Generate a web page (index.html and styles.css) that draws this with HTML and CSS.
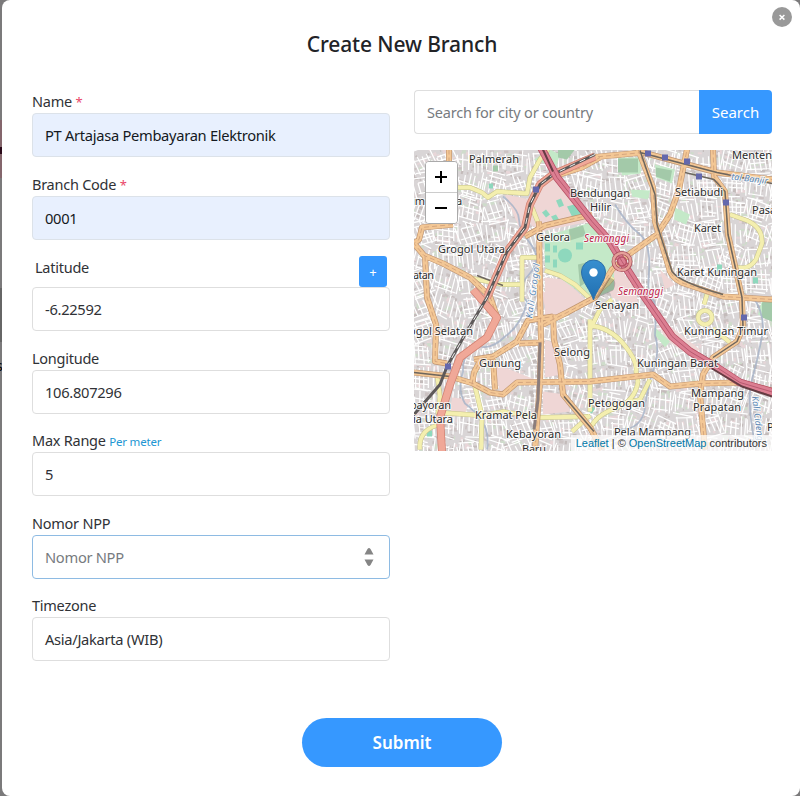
FILE: index.html
```html
<!DOCTYPE html>
<html lang="en">
<head>
<meta charset="utf-8">
<title>Create New Branch</title>
<link rel="stylesheet" href="styles.css">
</head>
<body>
<div class="backdrop"><i class="stripe"></i><i class="mark"></i><i class="shade"></i><span class="behind">s</span></div>
<main class="modal">
  <button class="close" aria-label="Close"><svg viewBox="0 0 20 20"><path d="M7.6 8l4.8 4.6M12.4 8l-4.8 4.6"/></svg></button>
  <h1>Create New Branch</h1>
  <div class="columns">
    <form class="fields">
      <div class="field"><label>Name <b>*</b></label><div class="input filled">PT Artajasa Pembayaran Elektronik</div></div>
      <div class="field"><label>Branch Code <b>*</b></label><div class="input filled">0001</div></div>
      <div class="field"><div class="row"><label>Latitude</label><button type="button" class="add">+</button></div><div class="input">-6.22592</div></div>
      <div class="field"><label>Longitude</label><div class="input">106.807296</div></div>
      <div class="field"><label>Max Range <small>Per meter</small></label><div class="input">5</div></div>
      <div class="field"><label>Nomor NPP</label><div class="input focus"><span>Nomor NPP</span><svg class="spin" viewBox="0 0 10 20"><path d="M.5 7.500L3.500 2Q5 0 6.500 2L9.500 7.500ZM.5 12.500H9.500L6.500 18Q5 20 3.500 18Z"/></svg></div></div>
      <div class="field"><label>Timezone</label><div class="input">Asia/Jakarta (WIB)</div></div>
    </form>
    <section class="side">
      <div class="search"><div class="query">Search for city or country</div><button>Search</button></div>
      <div class="map">
        <svg class="tiles" viewBox="414 150.5 358 300.5">
          <rect x="414" y="150" width="358" height="302" fill="#d9d5d6"/>
          <g id="blocks"></g>
          <g id="streets"></g>
          <g class="pink">
            <path d="M542 178L555 180 590 222 540 232 528 222ZM505 195L530 200 520 230Z"/>
            <path d="M545 278L565 280 585 300 545 322ZM545 340L558 345 562 375 545 378ZM543 392L565 395 570 412 543 415ZM492 363L535 380 500 392ZM585 230L600 240 635 290 640 310 612 298ZM452 398L470 400 465 414 450 418ZM660 270L675 285 665 290ZM655 315L700 350 690 356 665 340ZM540 290L550 296 546 310Z"/>
          </g>
          <g class="green">
            <path d="M544 237L594 222 614 250 614 290 590 300 545 268Z"/>
            <path d="M618 158L640 158 641 174 622 176ZM655 165L675 170 672 184 656 178ZM762 301H772V322L758 315ZM631 190L650 191 648 200 632 197ZM675 208L690 215 686 225 674 220ZM655 328L670 342 665 348 654 334ZM534 160L550 150 560 155 556 168Z"/>
          </g>
          <g class="wood"><path d="M618 159h20v14h-20zM762 303l10-3v22l-10-4zM656 168l16 3-2 11-14-5zM578 265l12-3 2 17-12 8zM569 230l14-4 3 10-16 5zM493 166h5v6h-5zM558 150h17l-8 10-9-2z"/></g>
          <g class="pitch">
            <circle cx="565" cy="256" r="7"/><path d="M545 244h5v8h-5zM553 246h4v7h-4zM545 256h5v7h-5zM553 260h4v8h-4zM576 243h7v7h-7zM542 213l4-3 4 5-4 3zM551 217l5-2 3 5-5 2zM556 201l5-2 3 7-5 2zM717 265h5v7h-5zM753 278h5v6h-5zM427 431h5v6h-5zM489 184h4v5h-4zM590 406l5 3-3 5-4-2zM567 207l14-4 2 13-10 3z"/>
          </g>
          <g class="water">
            <path d="M503 197Q519 210 519 220T531 245T529 275T527 302Q522 325 505 337Q492 350 480 347Q462 352 463 372Q457 390 465 404Q477 413 480 420Q490 430 487 450"/>
            <path d="M615 205Q627 225 639 234T649 272T652 300T655 336Q660 350 654 368T645 408T620 430"/>
            <path d="M718 174Q745 174 772 180M752 296Q766 315 762 337T752 380T756 450"/>
          </g>
          <g class="road yellow-c"><path d="M457 188L470 188 482 193 488 198 497 192 527 194 530 178 540 160 548 150M532 208L540 228M522 302V258H537M545 271L560 276 575 285 590 299 608 284 613 278M730 215L747 221Q763 228 762 244L756 260Q748 272 735 267M590 326Q610 328 624 345T636 372L638 382Q635 402 615 409T590 430M590 412V320M590 330L600 310 612 300M437 375L440 397 438 413 482 416 503 412 540 418 590 417M475 387L482 416 481 450M420 450Q418 430 440 425M704 305L707 295M713 329L730 343M590 416L572 432M470 278L482 281 502 285 520 285M650 380L640 400 609 407"/><circle cx="705" cy="318" r="7"/></g>
          <g class="road yellow"><path d="M457 188L470 188 482 193 488 198 497 192 527 194 530 178 540 160 548 150M532 208L540 228M522 302V258H537M545 271L560 276 575 285 590 299 608 284 613 278M730 215L747 221Q763 228 762 244L756 260Q748 272 735 267M590 326Q610 328 624 345T636 372L638 382Q635 402 615 409T590 430M590 412V320M590 330L600 310 612 300M437 375L440 397 438 413 482 416 503 412 540 418 590 417M475 387L482 416 481 450M420 450Q418 430 440 425M704 305L707 295M713 329L730 343M590 416L572 432M470 278L482 281 502 285 520 285M650 380L640 400 609 407"/><circle cx="705" cy="318" r="7"/></g>
          <g id="orange-roads">
            <path d="M449 150V166M453 225L422 228 419 240 414 244 424 256 443 264 470 278 490 297 497 317M425 257L427 298 436 325 435 362 447 364M525 237L545 226 592 215M539 222L540 295 541 342 540 382 535 450M414 373L450 377 473 384 490 393 503 395 517 383 590 382 653 375 670 387 700 384 740 383 772 391M553 315L554 340 560 365 563 395 590 428 602 450M543 325L567 313 595 298 612 270 630 254 657 235 670 215 679 190 687 150M474 360L493 357 517 342 528 321 553 317M472 385L474 373 482 358M590 158L643 153 680 163 717 173 772 180M560 175L582 168 600 158M713 150L714 177 725 192 728 235 742 298 743 328 737 342 713 358 703 375 700 395 705 450M493 360L495 390M541 343L519 344"/>
            <path d="M638 150L653 188 655 222 670 272Q675 282 687 285L723 297 772 300"/>
          </g>
          <g class="rail"><path d="M540 343L538 400 534 430"/><path d="M640 151L655 195 657 225 672 272Q680 283 723 295M414 373L450 377M564 397L594 432M685 173L714 180 725 192 728 235 742 298 743 328 737 342 713 358M717 173L772 184M640 153L717 173M477 276L503 286"/></g>
          <g class="salmon-c"><path d="M595 157L553 175 540 185 530 205 525 228 507 252 487 298M473 290L497 318 487 338 460 358 450 385 440 418 442 452"/></g>
          <g class="salmon"><path d="M595 157L553 175 540 185 530 205 525 228 507 252 487 298M473 290L497 318 487 338 460 358 450 385 440 418 442 452"/></g>
          <g class="train"><path d="M595 155L553 175 540 185 530 205 525 228 507 252 487 298 465 335 447 367 440 385 414 415"/></g>
          <g class="train-dash"><path d="M595 155L553 175 540 185 530 205 525 228 507 252 487 298 465 335 447 367"/></g>
          <g class="toll-c"><path d="M541 148L557 178 592 222 610 242 622 262 645 298 672 337 690 352 717 368 740 383 774 393"/></g>
          <g class="toll"><path d="M541 148L557 178 592 222 610 242 622 262 645 298 672 337 690 352 717 368 740 383 774 393"/></g>
          <g class="toll-mid"><path d="M541 148L557 178 592 222 610 242 622 262 645 298 672 337 690 352 717 368 740 383 774 393"/></g>
          <g class="ring"><circle cx="622" cy="262" r="8.500"/><circle cx="622" cy="262" r="8.500"/><circle cx="622" cy="262" r="4.500"/></g>
          <path class="dark" d="M543 150L553 172M712 369L742 387 772 397"/>
          <g class="station"><path d="M533 187h6v6h-6zM645 151h6v6h-6zM662 155h6v6h-6zM684 159h6v6h-6zM696 174h6v6h-6zM723 200h6v6h-6zM741 315h6v6h-6zM445 364h6v6h-6z"/></g>
          <g class="river-name"><text transform="translate(532 319) rotate(-82)" textLength="55">Kali Grogol</text><text transform="translate(731 180) rotate(7)">tal Banjir</text><text transform="translate(752 397) rotate(83)">Kali Cideng</text></g>
          <g class="places">
            <text x="469" y="163" textLength="50">Palmerah</text><text x="732" y="159" textLength="40">Menten</text>
            <text x="570" y="197.500" textLength="60">Bendungan</text><text x="590" y="211.500" textLength="21">Hilir</text>
            <text x="675" y="196" textLength="48">Setiabudi</text><text x="752" y="214">Pasar</text><text x="694" y="232" textLength="27">Karet</text>
            <text x="408" y="205">um</text><text x="456" y="205">a</text><text x="536" y="241" textLength="34">Gelora</text><text x="438" y="253" textLength="67">Grogol Utara</text>
            <text x="413" y="279.500" textLength="21">atan</text><text x="677" y="276" textLength="80">Karet Kuningan</text><text x="595" y="309" textLength="44">Senayan</text>
            <text x="409" y="335" textLength="64">ogol Selatan</text><text x="684" y="335" textLength="84">Kuningan Timur</text><text x="554" y="356.500" textLength="36">Selong</text>
            <text x="479" y="367.500" textLength="42">Gunung</text><text x="637" y="367.500" textLength="81">Kuningan Barat</text><text x="691" y="397" textLength="53">Mampang</text><text x="693" y="411" textLength="48">Prapatan</text>
            <text x="588" y="407" textLength="57">Petogogan</text><text x="410" y="409.500" textLength="41">bayoran</text><text x="413" y="423.500" textLength="40">ia Utara</text><text x="475" y="419" textLength="62">Kramat Pela</text>
            <text x="506" y="438.500" textLength="55">Kebayoran</text><text x="522" y="453" textLength="24">Baru</text><text x="614" y="436.500" textLength="77">Pela Mampang</text><text x="767" y="431">P</text>
            <text class="red" x="584" y="242" textLength="45">Semanggi</text><text class="red" x="618" y="295" textLength="45">Semanggi</text>
          </g>
          <defs><linearGradient id="pin" x1="0" y1="0" x2="0" y2="1"><stop offset="0" stop-color="#388fd0"/><stop offset="1" stop-color="#216fb0"/></linearGradient></defs>
          <path d="M594 300L609 278Q619 280 613 291Z" fill="#000" opacity=".22"/>
          <path d="M593.500 300.500C591 291 581.500 282 581.500 272.500a12 12 0 0 1 24 0C605.500 282 596 291 593.500 300.500Z" fill="url(#pin)" stroke="#2c6fa8"/>
          <circle cx="593.500" cy="273" r="4.200" fill="#fff"/>
        </svg>
        <div class="zoom"><button aria-label="Zoom in"><svg viewBox="0 0 14 14"><path d="M1 7H13M7 1V13"/></svg></button><button aria-label="Zoom out"><svg viewBox="0 0 14 14"><path d="M1 7H13"/></svg></button></div>
        <div class="credit"><a>Leaflet</a> | © <a>OpenStreetMap</a> contributors</div>
      </div>
    </section>
  </div>
  <button class="submit">Submit</button>
</main>
<script src="map.js"></script>
</body>
</html>
```
FILE: styles.css
```css
*{box-sizing:border-box}
body{margin:0;width:800px;height:796px;overflow:hidden;background:#7b7a7b;font-family:"Noto Sans","Open Sans",sans-serif;color:#303236;position:relative}
button{border:0;padding:0;font-family:inherit}
.backdrop{position:absolute;inset:0}
.stripe{position:absolute;top:120px;width:4px;height:58px;background:#84666c}
.mark{position:absolute;top:147px;width:2px;height:7px;background:#2a0919}
.shade{position:absolute;top:288px;width:4px;height:54px;background:#666}
.behind{position:absolute;left:-4px;top:356px;font-size:14px;color:#000}
.modal{position:relative;margin-left:2px;width:798px;height:796px;background:#fff;border-radius:8px;padding:0 28px 0 30px;display:flex;flex-direction:column}
.close{position:absolute;left:770px;top:7px;width:20px;height:20px;border-radius:50%;background:#999}
.close svg{display:block;width:20px;height:20px;fill:none;stroke:#fff;stroke-width:1.5}
h1{margin:30px 0 0;height:28px;text-align:center;font-size:21px;line-height:28px;font-weight:500;letter-spacing:-.12px;color:#222327}
.columns{display:grid;grid-template-columns:358px 358px;gap:24px;margin-top:32px}
.fields{display:flex;flex-direction:column;gap:16.500px;padding-top:1.300px;margin:0}
label{display:block;height:22px;line-height:20.500px;font-size:14.500px;letter-spacing:-.25px;white-space:nowrap}
label b{font-weight:400;font-size:13px;color:#e94568}
label small{font-size:11.500px;letter-spacing:-.2px;color:#2196d3}
.row{height:31px;display:flex;justify-content:space-between;padding:0 3px}
.row label{line-height:22px}
.add{width:28px;height:31px;border-radius:3px;background:#3698ff;color:#fff;font-size:13px}
.input{height:44px;border:1px solid #dedede;border-radius:4px;padding:0 12px;display:flex;align-items:center;justify-content:space-between;font-size:14.700px;letter-spacing:-.3px}
.filled{background:#e8f0fe;color:#141922;border-color:#dce2e9}
.focus{border-color:#8ebbe3;color:#777b80}
.spin{width:10px;height:20px;margin-right:3px;fill:#858585}
.search{height:44px;display:flex}
.query{width:285px;border:1px solid #dedede;border-right:0;border-radius:4px 0 0 4px;padding-left:12px;line-height:43px;font-size:14.500px;letter-spacing:-.2px;color:#777b80}
.search button{flex:1;border-radius:0 4px 4px 0;background:#3698ff;color:#fff;font-size:15px}
.side{padding-top:.400px}
.map{position:relative;margin-top:16px;width:358px;height:300.500px;overflow:hidden}
.tiles{display:block;width:358px;height:300.500px}
.tiles path,.tiles circle{stroke-linejoin:round}
#streets path{fill:none;stroke:#fff}
.pink{fill:#efd6d5}.green{fill:#c4e9c8}.wood{fill:#a3c9a9}.pitch{fill:#8ed8bd}
.water{fill:none;stroke:#a8b4c8;stroke-width:1.800;opacity:.85}
.road{fill:none;stroke:#f4efaf;stroke-width:3.800}
.yellow-c{stroke:#c5c28b;stroke-width:4.800}
#orange-roads{fill:none;stroke:#f3c795;stroke-width:4.800}
#orange-roads .casing{stroke:#bf936f;stroke-width:6}
#orange-roads .center{stroke:#c99874;stroke-width:.700;stroke-dasharray:5 3}
.rail{fill:none;stroke:#6d665e;stroke-width:1.500}
.rail path:first-child{stroke:#8b7d7c;stroke-width:3}
.salmon-c{fill:none;stroke:#d28273;stroke-width:8}.salmon{fill:none;stroke:#f0a898;stroke-width:6.500}
.train{fill:none;stroke:#5d5959;stroke-width:3}.train-dash{fill:none;stroke:#eee;stroke-width:1;stroke-dasharray:6 5}
.toll-c{fill:none;stroke:#b65265;stroke-width:8}.toll{fill:none;stroke:#dc7f92;stroke-width:6.500}.toll-mid{fill:none;stroke:#b85a70;stroke-width:1}
.ring{fill:none;stroke:#a9505c;stroke-width:4}
.ring circle+circle{stroke:#e5a09a;stroke-width:2.500}
.ring circle:last-child{stroke:#b65265;stroke-width:1.500}
.dark{fill:none;stroke:#653d43;stroke-width:2}
.station{fill:#6468ad}
.places text,.river-name text{paint-order:stroke;stroke:#fffc;stroke-width:2px;stroke-linejoin:round;font-size:11px;fill:#2c2c2c}
.river-name text{font-size:9px;font-style:italic;fill:#5a87b5}
.places .red{fill:#bd244c;font-style:italic;font-size:10px}
.zoom{position:absolute;left:10.500px;top:10.500px;width:33px;height:63px;border:1px solid #aaa;border-radius:4px;background:#fff;display:flex;flex-direction:column;overflow:hidden}
.zoom button{flex:1;background:#fff;display:grid;place-items:center}
.zoom button+button{border-top:1px solid #ccc}
.zoom svg{width:14px;height:14px;fill:none;stroke:#000;stroke-width:2}
.credit{position:absolute;right:0;bottom:0;height:16px;padding:0 5px;background:#ffffffb8;font:11px/16px "Liberation Sans",sans-serif;color:#333;white-space:nowrap}
.credit a{color:#0078a8}
.submit{width:200px;height:49px;margin:56.500px 0 0 270px;border-radius:25px;background:#3698ff;color:#fff;font-size:17px;font-weight:600}
```
FILE: map.js
```js
const NS = 'http://www.w3.org/2000/svg';
let seed = 71;
const rnd = () => (seed = (seed * 16807) % 2147483647) / 2147483647;
const add = (parent, d, attrs) => {
  const p = document.createElementNS(NS, 'path');
  p.setAttribute('d', d);
  for (const k in attrs) p.setAttribute(k, attrs[k]);
  parent.appendChild(p);
};

// Building blocks and residential streets, drawn district by district
const blocks = document.getElementById('blocks');
const streets = document.getElementById('streets');
for (let y = 150; y < 455; y += 24) {
  for (let x = 410; x < 776; x += 24) {
    const a = (rnd() - 0.5) * 0.8;
    const c = Math.cos(a), s = Math.sin(a);
    const pt = (u, v) => (x + 12 + u * c - v * s).toFixed(1) + ' ' + (y + 12 + u * s + v * c).toFixed(1);
    for (let i = 0; i < 18; i++) {
      const u = rnd() * 26 - 13, v = rnd() * 26 - 13, w = 1 + rnd() * 4, h = 1 + rnd() * 3;
      add(blocks, `M${pt(u, v)}L${pt(u + w, v)} ${pt(u + w, v + h)} ${pt(u, v + h)}Z`,
        { fill: ['#c3bbba', '#cbc2c2', '#e8d6d8', '#cfdccb'][Math.floor(rnd() * 4)] });
    }
    let d = '';
    for (let i = -13; i < 14; i += 4 + rnd() * 2) {
      const k = rnd() * 10;
      d += `M${pt(i, -13 + k)}L${pt(i + rnd() * 2, 13 - rnd() * 7)}`;
      if (rnd() > 0.4) d += `M${pt(-13 + k, i)}L${pt(13 - rnd() * 9, i + rnd() * 2)}`;
    }
    add(streets, d, { 'stroke-width': 1.25 });
  }
}

// Primary roads get a darker edge below and a dashed centre line above
const roads = document.getElementById('orange-roads');
const fills = [...roads.children];
for (const f of fills) {
  const edge = f.cloneNode();
  edge.setAttribute('class', 'casing');
  roads.insertBefore(edge, roads.firstChild);
  const line = f.cloneNode();
  line.setAttribute('class', 'center');
  roads.appendChild(line);
}
```
